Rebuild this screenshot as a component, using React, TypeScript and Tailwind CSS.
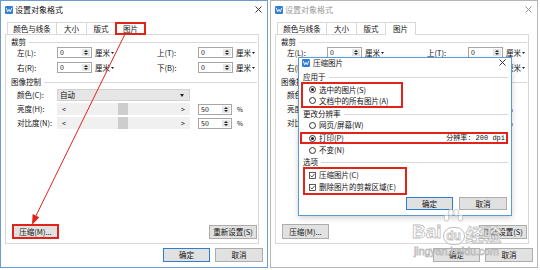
import React from "react";

const RED = "#e2231a";

function WpsIcon() {
  return (
    <svg width="8" height="8" viewBox="0 0 8 8" className="shrink-0">
      <rect x="0" y="0" width="8" height="8" rx="1.2" fill="#2f7fd8" />
      <path d="M1.4 2.3 L2.7 5.8 L4 3.4 L5.3 5.8 L6.6 2.3" fill="none" stroke="#fff" strokeWidth="0.9" strokeLinejoin="round" strokeLinecap="round" />
    </svg>
  );
}

function CloseX({ color }: { color: string }) {
  return (
    <svg width="7" height="7" viewBox="0 0 7 7" className="shrink-0">
      <path d="M0.5 0.5L6.5 6.5M6.5 0.5L0.5 6.5" stroke={color} strokeWidth="0.9" />
    </svg>
  );
}

function Spin({ value, wide }: { value: string; wide?: boolean }) {
  return (
    <div className={`flex h-[11px] shrink-0 ${wide ? "w-[35px]" : "w-[34px]"} border border-[#a6a6a6] bg-white`}>
      <div className="flex-1 flex items-center pl-[2px] text-[7px] leading-none">{value}</div>
      <div className="w-[8px] my-[1px] mr-[1px] flex flex-col items-center justify-center gap-[1px] bg-[#e6e6e6]">
        <svg width="4" height="2" viewBox="0 0 4 2"><path d="M0 2L2 0L4 2Z" fill="#222" /></svg>
        <svg width="4" height="2" viewBox="0 0 4 2"><path d="M0 0L2 2L4 0Z" fill="#222" /></svg>
      </div>
    </div>
  );
}

function Unit({ wide }: { wide?: boolean }) {
  return (
    <div className={`flex items-center gap-[1px] pl-[3px] ${wide ? "w-[65px]" : ""}`}>
      <span>厘米</span>
      <svg width="3" height="2" viewBox="0 0 3 2"><path d="M0 0L1.5 2L3 0Z" fill="#222" /></svg>
    </div>
  );
}

function Group({ label, className }: { label: string; className?: string }) {
  return (
    <div className={`flex items-center h-[10px] pl-[5px] pr-[1px] ${className ?? ""}`}>
      <span>{label}</span>
      <div className="flex-1 ml-[3px] h-px bg-[#d8d8d8]" />
    </div>
  );
}

function CropRow({ a, b, className }: { a: string; b: string; className?: string }) {
  return (
    <div className={`flex items-center h-[11px] pl-[11px] ${className ?? ""}`}>
      <span className="w-[40px] shrink-0">{a}</span>
      <Spin value="0" wide />
      <Unit wide />
      <span className="w-[41px] shrink-0">{b}</span>
      <Spin value="0" wide />
      <Unit />
    </div>
  );
}

function Slider() {
  return (
    <div className="relative w-[133px] h-[12px] bg-[#f0f0f0] flex items-center justify-between px-[5px] text-[7px] leading-none shrink-0">
      <span>&lt;</span>
      <div className="absolute left-[61px] top-0 w-[10px] h-full bg-[#cdcdcd]" />
      <span>&gt;</span>
    </div>
  );
}

function SliderRow({ label, className }: { label: string; className?: string }) {
  return (
    <div className={`flex items-center h-[12px] pl-[11px] ${className ?? ""}`}>
      <span className="w-[40px] shrink-0">{label}</span>
      <Slider />
      <div className="ml-[8px]">
        <Spin value="50" />
      </div>
      <span className="ml-[5px] text-[6.5px]">%</span>
    </div>
  );
}

function Button({ label, def, className }: { label: string; def?: boolean; className?: string }) {
  return (
    <div
      className={`flex items-center justify-center bg-[#e1e1e1] border ${def ? "border-[#2a7fd0]" : "border-[#adadad]"} leading-none ${className ?? ""}`}
    >
      {label}
    </div>
  );
}

function Radio({ checked }: { checked?: boolean }) {
  return (
    <span className="w-[7px] h-[7px] shrink-0 rounded-full border border-[#333] bg-white flex items-center justify-center">
      {checked && <span className="w-[3px] h-[3px] rounded-full bg-[#1a1a1a]" />}
    </span>
  );
}

function Check() {
  return (
    <svg width="7" height="7" viewBox="0 0 7 7" className="shrink-0">
      <rect x="0.5" y="0.5" width="6" height="6" fill="#fff" stroke="#333" strokeWidth="0.8" />
      <path d="M1.5 3.6 L2.9 5 L5.6 1.9" fill="none" stroke="#222" strokeWidth="0.8" />
    </svg>
  );
}

function MainDialog({ active, highlight, children }: { active: boolean; highlight?: boolean; children?: React.ReactNode }) {
  return (
    <div
      className={`relative w-[268px] h-[268px] shrink-0 flex flex-col bg-white border ${active ? "border-[#6d9bd0]" : "border-[#b5b5b5]"}`}
    >
      <div className="h-[17px] flex items-center pl-[4px] pr-[5px]">
        <WpsIcon />
        <span className={`ml-[2px] text-[8px] ${active ? "text-[#111]" : "text-[#9a9a9a]"}`}>设置对象格式</span>
        <div className="flex-1" />
        <CloseX color={active ? "#222" : "#8a8a8a"} />
      </div>
      <div className="pl-[4px]">
        <div className="flex items-end h-[16px] pl-[2px]">
          <div className="h-[12px] w-[50px] border border-b-0 border-[#d9d9d9] flex items-center justify-center">颜色与线条</div>
          <div className="h-[12px] w-[31px] -ml-px border border-b-0 border-[#d9d9d9] flex items-center justify-center">大小</div>
          <div className="h-[12px] w-[30px] -ml-px border border-b-0 border-[#d9d9d9] flex items-center justify-center">版式</div>
          <div
            className={`relative z-10 h-[13px] -mb-px w-[31px] -ml-px bg-white border border-b-0 border-[#d9d9d9] flex items-center justify-center pb-px ${highlight ? "outline-2 outline-offset-[-2px] outline-[#e2231a]" : ""}`}
          >
            图片
          </div>
        </div>
        <div className="w-[254px] h-[210px] border border-[#d9d9d9] flex flex-col">
          <Group label="裁剪" className="mt-[2px]" />
          <CropRow a="左(L):" b="上(T):" />
          <CropRow a="右(R):" b="下(B):" className="mt-[4px]" />
          <Group label="图像控制" className="mt-[4px]" />
          <div className="flex items-center h-[12px] pl-[11px] mt-[2px]">
            <span className="w-[40px] shrink-0">颜色(C):</span>
            <div className="w-[133px] h-[12px] bg-[#e6e6e6] border border-[#d2d2d2] flex items-center pl-[2px] pr-[5px]">
              <span>自动</span>
              <div className="flex-1" />
              <svg width="4" height="3" viewBox="0 0 4 3"><path d="M0 0L2 3L4 0Z" fill="#222" /></svg>
            </div>
          </div>
          <SliderRow label="亮度(H):" className="mt-[2px]" />
          <SliderRow label="对比度(N):" className="mt-[2px]" />
          <div className="flex-1" />
          <div className="flex items-end justify-between pl-[6px] pr-[1px] mb-[4px]">
            <Button
              label="压缩(M)..."
              className={`w-[47px] h-[15px] ${highlight ? "outline-2 outline-offset-[-2px] outline-[#e2231a]" : ""}`}
            />
            <Button label="重新设置(S)" className="w-[48px] h-[14px]" />
          </div>
        </div>
      </div>
      <div className="flex justify-end gap-[5px] pr-[4px] mt-[4px]">
        <Button label="确定" def={active} className="w-[47px] h-[14px]" />
        <Button label="取消" className="w-[48px] h-[14px]" />
      </div>
      {children}
    </div>
  );
}

function CompressDialog() {
  return (
    <div className="absolute left-[27px] top-[56px] w-[214px] h-[159px] bg-white border border-[#5b9bd5] shadow-[0_2px_6px_rgba(0,0,0,0.18)] flex flex-col z-20">
      <div className="h-[9px] flex items-center pl-[3px] pr-[5px]">
        <WpsIcon />
        <span className="ml-[3px] text-[7.5px] leading-none">压缩图片</span>
        <div className="flex-1" />
        <CloseX color="#222" />
      </div>
      <div className="flex items-center h-[10px] pl-[4px] pr-[3px] mt-[5px]">
        <span>应用于</span>
        <div className="flex-1 ml-[3px] h-px bg-[#d8d8d8]" />
      </div>
      <div className="ml-[2px] w-[102px] h-[26px] border-2 border-[#e2231a] flex flex-col">
        <div className="flex items-center h-[11px] pl-[6px] gap-[3px]">
          <Radio checked />
          <span>选中的图片(S)</span>
        </div>
        <div className="flex items-center h-[11px] pl-[6px] gap-[3px]">
          <Radio />
          <span>文档中的所有图片(A)</span>
        </div>
      </div>
      <div className="flex items-center h-[10px] pl-[4px] pr-[3px] mt-[1px]">
        <span>更改分辨率</span>
        <div className="flex-1 ml-[3px] h-px bg-[#d8d8d8]" />
      </div>
      <div className="flex items-center h-[10px] pl-[10px] gap-[3px] mt-[1px]">
        <Radio />
        <span>网页/屏幕(W)</span>
      </div>
      <div className="ml-[1px] mt-[2px] w-[208px] h-[12px] border-2 border-[#e2231a] flex items-center pl-[7px] pr-[1px] gap-[3px]">
        <Radio checked />
        <span>打印(P)</span>
        <div className="flex-1" />
        <span className="font-['Liberation_Mono','Noto_Sans_CJK_SC',monospace] text-[7px]">分辨率: 200 dpi</span>
      </div>
      <div className="flex items-center h-[10px] pl-[10px] gap-[3px] mt-[1px]">
        <Radio />
        <span>不变(N)</span>
      </div>
      <div className="flex items-center h-[10px] pl-[4px] pr-[3px] mt-[2px]">
        <span>选项</span>
        <div className="flex-1 ml-[3px] h-px bg-[#d8d8d8]" />
      </div>
      <div className="ml-[4px] w-[104px] h-[28px] border-2 border-[#e2231a] flex flex-col pl-[4px]">
        <div className="flex items-center h-[12px] gap-[3px]">
          <Check />
          <span>压缩图片(C)</span>
        </div>
        <div className="flex items-center h-[12px] gap-[3px]">
          <Check />
          <span>删除图片的剪裁区域(E)</span>
        </div>
      </div>
      <div className="flex justify-end gap-[6px] pr-[4px] mt-[2px]">
        <Button label="确定" def className="w-[47px] h-[13px]" />
        <Button label="取消" className="w-[48px] h-[13px]" />
      </div>
    </div>
  );
}

function Watermark() {
  const stroke = "text-white [-webkit-text-stroke:0.8px_#b8b8b8]";
  return (
    <div className="absolute left-[412px] top-[208px] pointer-events-none opacity-90 z-30 flex flex-col">
      <div className="flex items-end">
        <span className={`font-['Liberation_Sans',sans-serif] font-bold text-[19px] leading-none mb-[4px] ${stroke}`}>Bai</span>
        <div className="flex flex-col items-center ml-[1px]">
          <svg width="21" height="19" viewBox="0 0 21 19">
            <g fill="#fff" stroke="#b8b8b8" strokeWidth="0.8">
              <ellipse cx="3.5" cy="10" rx="2.4" ry="3" />
              <ellipse cx="7.8" cy="4.5" rx="2.4" ry="3.2" />
              <ellipse cx="13.2" cy="4.5" rx="2.4" ry="3.2" />
              <ellipse cx="17.5" cy="10" rx="2.4" ry="3" />
            </g>
          </svg>
          <div className="w-[22px] h-[18px] rounded-full border border-[#b8b8b8] bg-white/70 flex items-center justify-center">
            <span className={`font-['Liberation_Sans',sans-serif] font-bold text-[12px] leading-none ${stroke}`}>du</span>
          </div>
        </div>
        <span className={`font-['Noto_Sans_CJK_SC',sans-serif] font-bold text-[18px] leading-none mb-[2px] ml-[1px] ${stroke}`}>经验</span>
      </div>
      <span className={`font-['Liberation_Sans',sans-serif] text-[10.5px] leading-none mt-[1px] ml-[2px] ${stroke}`}>jingyan.baidu.com</span>
    </div>
  );
}

export default function App() {
  return (
    <div className="relative w-[540px] h-[270px] overflow-hidden bg-white flex gap-[2px] text-[#111] text-[7.5px] leading-none font-['Noto_Sans_CJK_SC','Liberation_Sans',sans-serif]">
      <MainDialog active highlight />
      <MainDialog active={false}>
        <CompressDialog />
      </MainDialog>
      <Watermark />
      <svg className="absolute left-0 top-0 pointer-events-none z-40" width="540" height="270" viewBox="0 0 540 270">
        <line x1="125" y1="34" x2="35.9" y2="215.9" stroke={RED} strokeWidth="1" />
        <polygon points="32,225 39.3,217.2 32.6,214" fill={RED} />
      </svg>
    </div>
  );
}
